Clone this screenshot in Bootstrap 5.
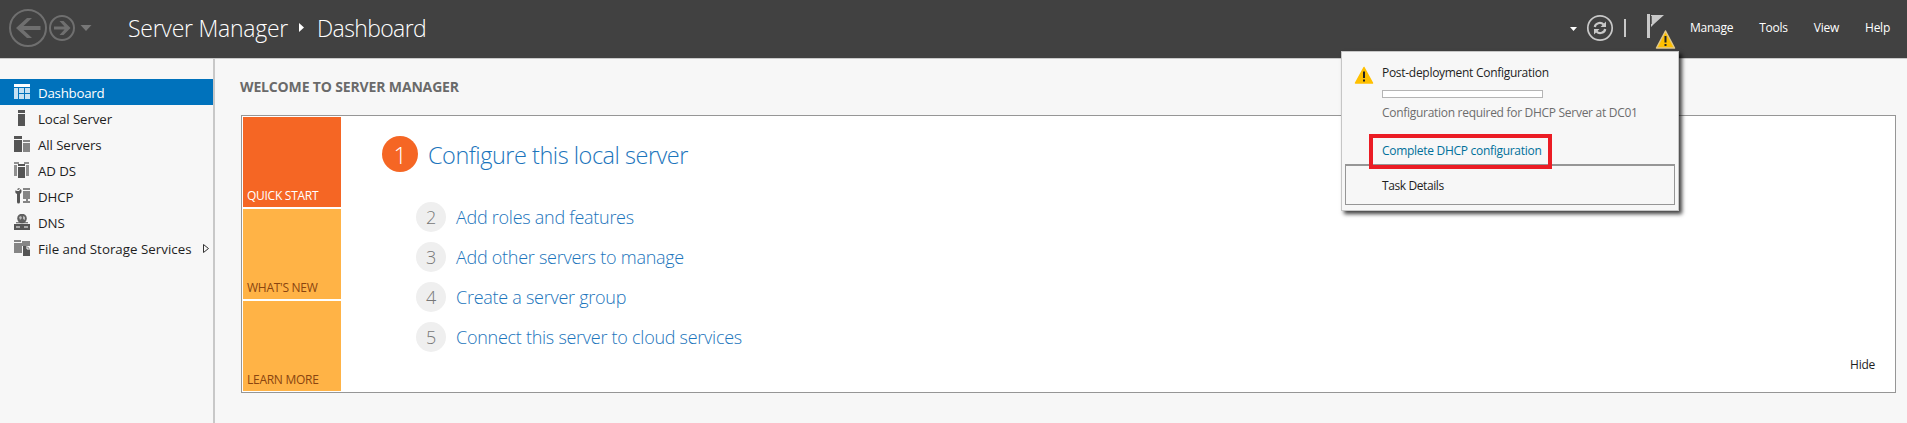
<!DOCTYPE html>
<html lang="en">
<head>
<meta charset="utf-8">
<title>Server Manager</title>
<link href="https://cdn.jsdelivr.net/npm/bootstrap@5.3.0/dist/css/bootstrap.min.css" rel="stylesheet">
<style>
body{font-family:"Open Sans","Noto Sans",sans-serif;font-size:12px;background:#f7f7f7;color:#1e1e1e;height:423px;overflow:hidden}
.topbar{height:59px;background:#414141;color:#fff;border-bottom:1px solid #c9c9c9;padding:0 17px 3px 9px}
.crumb{font-size:23px;font-weight:300;line-height:30px;margin-left:35px;letter-spacing:-.26px}
.crumb .page{letter-spacing:-.63px}
.crumb svg{margin:0 12px 0 11px}
.menu-items{gap:26px;margin-left:12px;letter-spacing:-.25px}
.side{width:215px;height:364px;border-right:2px solid #c8c8c8;padding-top:20px}
.side .list-group-item{height:26px;padding:0 0 0 14px;border:0;background:none;color:#1e1e1e;font-size:13.3px;letter-spacing:-.1px;line-height:26px;white-space:nowrap}
.side .list-group-item.active{background:#0072bc;color:#fff;letter-spacing:-.24px}
.side .list-group-item span{padding-top:1px}
.side .list-group-item .wide{letter-spacing:.02px}
.side svg{width:16px;height:16px;margin-right:8px;flex:none}
.side .expand{margin:1px 0 0 8px}
.content-pane{padding:18px 11px 0 26px}
.heading{font-size:14px;font-weight:700;color:#6a6a6a;line-height:19px;margin:0 0 19px -1px;letter-spacing:-.15px}
.welcome{height:278px;background:#fff;border:1px solid #969696;padding:1px}
.tiles{width:98px;gap:2px}
.tile{height:90px;padding:0 0 2px 4px;line-height:18px;color:#8a4510;background:#ffb346;letter-spacing:-.27px}
.tile.hot{background:#f56624;color:#fff}
.steps{padding:19px 0 0 41px}
.step{color:#1c75bc;font-size:18px;font-weight:300;line-height:30px;gap:10px;letter-spacing:-.27px}
.step.first{font-size:23.5px;line-height:38px;margin-bottom:28px;letter-spacing:-.48px}
.minor{margin-left:34px;gap:10px}
.dot{width:30px;height:30px;border-radius:50%;background:#efefef;color:#777;text-align:center;flex:none}
.first .dot{width:36px;height:36px;background:#f56624;color:#fff}
.hide-link{padding:0 19px 17px 0;line-height:18px;letter-spacing:-.25px}
.notice{position:absolute;left:1341px;top:51px;width:338px;height:160px;background:#f7f7f7;border:1px solid #c6c6c6;box-shadow:3px 3px 4px rgba(0,0,0,.75);padding:11px 3px 0;letter-spacing:-.29px;white-space:nowrap}
.notice .warn{margin:3px 8px 0 9px}
.notice .line{line-height:20px}
.meter{width:161px;height:8px;border:1px solid #b4b4b4;background:#fff;margin:7px 0 5px}
.detail{color:#6d6d6d}
.action{color:#00709a;margin:18px 0 3px}
.task{height:41px;border:1px solid #969696;border-top-width:2px;padding-left:36px;line-height:39px;letter-spacing:-.4px}
.callout{position:absolute;left:27px;top:82px;width:183px;height:35px;border:4px solid #eb1c24}
</style>
</head>
<body>
<header class="topbar d-flex align-items-center">
  <svg width="84" height="40" viewBox="0 0 84 40" fill="none" stroke="#6f6f6f"><circle cx="19" cy="20" r="18" stroke-width="2"/><path d="M7 20l11-10h5l-8.500 8H31.500v4H14.500l8.500 8h-5z" fill="#6f6f6f" stroke="none"/><circle cx="53" cy="20" r="12" stroke-width="2"/><path d="M61.500 20l-7-7h-4l5 5.500H45v3h10.500l-5 5.500h4z" fill="#6f6f6f" stroke="none"/><path d="M71.500 17h11l-5.500 6z" fill="#777" stroke="none"/></svg>
  <div class="crumb d-flex align-items-center"><span>Server Manager</span><svg width="6" height="9" viewBox="0 0 6 9"><path d="M0 0l5 4.500-5 4.500z" fill="#fff"/></svg><span class="page">Dashboard</span></div>
  <div class="d-flex align-items-center ms-auto">
    <svg width="110" height="50" viewBox="1568 2 110 50"><path d="M1570 26h7l-3.500 4z" fill="#fff"/><circle cx="1600" cy="27" r="12.200" fill="none" stroke="#c8c8c8" stroke-width="1.700"/><path d="M1594.800 26a5 4.500 0 0 1 8.700-2.500M1605.200 28a5 4.500 0 0 1-8.700 2.500" fill="none" stroke="#c8c8c8" stroke-width="2.200"/><path d="M1606 20.500v5.500h-5.500zM1594 33.500v-5.500h5.500z" fill="#c8c8c8"/><path d="M1625 18v18" stroke="#c8c8c8" stroke-width="2"/><path d="M1647 13h3v24h-3z" fill="#c8c8c8"/><path d="M1651 14h13l-10 9-3 3z" fill="#c8c8c8"/><path d="M1651.500 15v8" stroke="#666"/><path d="M1665.500 30l9 17h-18z" fill="#ffc000" stroke="#e0c88a" stroke-linejoin="round" stroke-width="1.500"/><path d="M1665.500 35v6.500M1665.500 43v2" stroke="#222" stroke-width="2"/></svg>
    <div class="menu-items d-flex"><span>Manage</span><span>Tools</span><span>View</span><span>Help</span></div>
  </div>
</header>
<div class="d-flex">
<nav class="side list-group rounded-0 flex-shrink-0">
  <a class="list-group-item active d-flex align-items-center"><svg viewBox="0 0 16 16"><path d="M0 0h16v3H0z" fill="#fff"/><path d="M0 4h4v11H0zM5 4h5v5H5zM11 4h5v5h-5zM5 10h5v5H5zM11 10h5v5h-5z" fill="#c5e0f2"/></svg><span>Dashboard</span></a>
  <a class="list-group-item d-flex align-items-center"><svg viewBox="0 0 16 16"><path d="M4 0h7v3H4zM4 4h7v12H4z" fill="#555"/></svg><span>Local Server</span></a>
  <a class="list-group-item d-flex align-items-center"><svg viewBox="0 0 16 16"><path d="M0 0h8v3H0zM0 4h8v12H0z" fill="#555"/><path d="M9 4h7v2H9zM9 7h7v9H9z" fill="#858585"/></svg><span>All Servers</span></a>
  <a class="list-group-item d-flex align-items-center"><svg viewBox="0 0 16 16"><path d="M0 0h5v2H0zM10 0h5v2h-5zM0 3h3v11H0zM12 3h3v11h-3z" fill="#909090"/><path d="M4 2h7v2H4zM4 5h7v11H4z" fill="#555"/></svg><span>AD DS</span></a>
  <a class="list-group-item d-flex align-items-center"><svg viewBox="0 0 16 16"><path d="M1.200 2.500a3.300 3.300 0 0 0 1.800 3.500v8a1.500 1.500 0 0 0 3 0V6a3.300 3.300 0 0 0 .8-5L5 3H3.500z" fill="#555"/><path d="M4 0h2l-1 2H3zM9 0h7v2H9zM9 3h7v8H9zM12 11h2v2h2v2H9v-2h3z" fill="#858585"/></svg><span>DHCP</span></a>
  <a class="list-group-item d-flex align-items-center"><svg viewBox="0 0 16 16"><circle cx="8" cy="4.500" r="4.800" fill="#606060"/><path d="M5 3l2-1 1 2-2 2zM9 2l2 1v3l-2-1z" fill="#bbb"/><path d="M2 8.200h12v1H2zM0 10h16v6H0z" fill="#555"/><path d="M2 12.500h4v1H2zM10 12.500h4v1h-4z" fill="#fff"/></svg><span>DNS</span></a>
  <a class="list-group-item d-flex align-items-center"><svg viewBox="0 0 16 16"><path d="M0 0h7v2H0zM0 3h8v10H0zM8 1h8v5H8z" fill="#858585"/><path d="M9 6h4l3 3v7H9z" fill="#555"/><path d="M13 6v3h3" fill="none" stroke="#fff"/></svg><span class="wide">File and Storage Services</span><svg class="expand" viewBox="0 0 16 16"><path d="M3.500 3.500v8l5-4z" fill="none" stroke="#333"/></svg></a>
</nav>
<main class="content-pane flex-grow-1">
  <h1 class="heading">WELCOME TO SERVER MANAGER</h1>
  <section class="welcome d-flex">
    <div class="tiles d-flex flex-column flex-shrink-0">
      <div class="tile hot d-flex align-items-end">QUICK START</div>
      <div class="tile d-flex align-items-end">WHAT'S NEW</div>
      <div class="tile d-flex align-items-end">LEARN MORE</div>
    </div>
    <div class="steps">
      <div class="step first d-flex"><span class="dot">1</span><span>Configure this local server</span></div>
      <div class="minor d-flex flex-column">
        <div class="step d-flex"><span class="dot">2</span><span>Add roles and features</span></div>
        <div class="step d-flex"><span class="dot">3</span><span>Add other servers to manage</span></div>
        <div class="step d-flex"><span class="dot">4</span><span>Create a server group</span></div>
        <div class="step d-flex"><span class="dot">5</span><span>Connect this server to cloud services</span></div>
      </div>
    </div>
    <div class="hide-link ms-auto align-self-end">Hide</div>
  </section>
</main>
</div>
<div class="notice">
  <div class="d-flex align-items-start">
    <svg class="warn" width="20" height="18" viewBox="0 0 20 18"><path d="M10 1.500l8.500 15.500h-17z" fill="#ffc000" stroke="#ffc000" stroke-linejoin="round" stroke-width="1.500"/><path d="M10 5.500v6.500M10 13.500v2" stroke="#222" stroke-width="2"/></svg>
    <div>
      <div class="line">Post-deployment Configuration</div>
      <div class="meter"></div>
      <div class="line detail">Configuration required for DHCP Server at DC01</div>
      <div class="line action">Complete DHCP configuration</div>
    </div>
  </div>
  <div class="task">Task Details</div>
  <div class="callout"></div>
</div>
<script src="https://cdn.jsdelivr.net/npm/bootstrap@5.3.0/dist/js/bootstrap.bundle.min.js"></script>
</body>
</html>
